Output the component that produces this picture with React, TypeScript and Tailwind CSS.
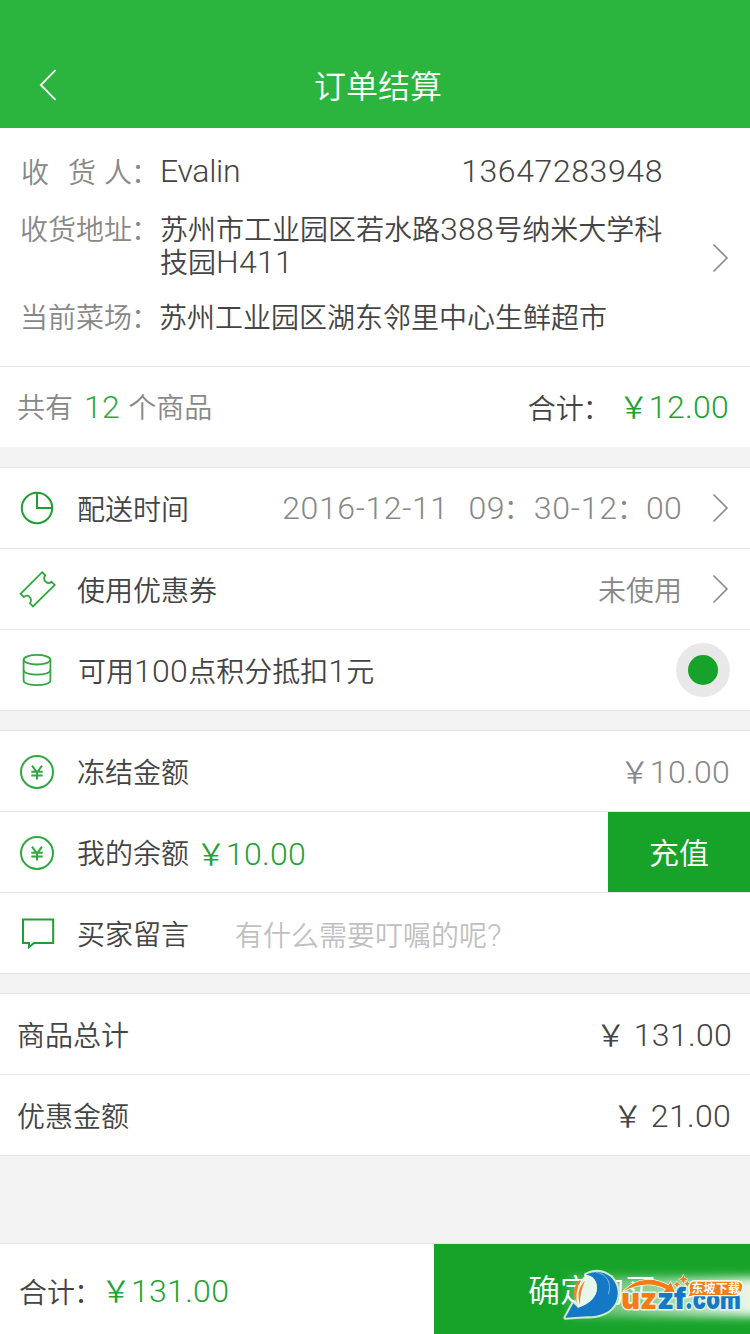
import type { ReactNode } from "react";

function Num({ children }: { children: ReactNode }) {
  return (
    <span className="font-['Roboto'] font-light text-[32px] tracking-[0.3px] leading-none">
      {children}
    </span>
  );
}

function Yen() {
  return <span className="text-[30px] inline-block w-[28px] -indent-[2px]">￥</span>;
}

function Colon() {
  return <span className="inline-block w-[28px] -translate-x-[1px]">：</span>;
}

function Arrow() {
  return (
    <svg width="18" height="30" viewBox="0 0 18 30" fill="none" stroke="#888" strokeWidth="1.6">
      <path d="M1.5 1.5 15 15 1.5 28.5" />
    </svg>
  );
}

function ClockIcon() {
  return (
    <svg width="38" height="38" viewBox="0 0 38 38" fill="none" stroke="#1f9e33" strokeWidth="2">
      <circle cx="19" cy="19" r="15.2" />
      <path d="M19 4v15h15" />
    </svg>
  );
}

function CouponIcon() {
  return (
    <svg width="38" height="38" viewBox="0 0 38 38" fill="none" stroke="#2fa83f" strokeWidth="1.8">
      <path d="M24.2 2.2 27.2 5.2C25.5 8 26 10.500 28 12C30 13.500 32 13 33.500 11.700L36.800 15 15 36.400 12 33.400C13.500 30.500 13.300 28.500 11.500 26.800C9.500 25 7.500 25.500 5.800 27L2.600 23.800Z" />
    </svg>
  );
}

function CoinsIcon() {
  return (
    <svg width="38" height="38" viewBox="0 0 38 38" fill="none" stroke="#2fa83f" strokeWidth="1.8">
      <ellipse cx="19" cy="8.700" rx="13.400" ry="4.800" />
      <path d="M5.600 8.700v20.800c0 6.200 26.800 6.200 26.800 0V8.700" />
      <path d="M5.600 19c0 6.200 26.800 6.200 26.800 0" />
    </svg>
  );
}

function YenIcon() {
  return (
    <svg className="translate-y-[1px]" width="38" height="38" viewBox="0 0 38 38" fill="none" stroke="#2fa83f" strokeWidth="2">
      <circle cx="19" cy="19" r="16" />
      <path d="M14 12.700 19 19.500l5-6.800M19 19.500V26.500M13.300 18.800h11.400M13.300 22.500h11.400" />
    </svg>
  );
}

function MessageIcon() {
  return (
    <svg className="translate-y-[1px]" width="38" height="38" viewBox="0 0 38 38" fill="none" stroke="#1f9e33" strokeWidth="2">
      <path d="M5 4.500h30.200v23.500H16l-5 4.200V28H5Z" />
    </svg>
  );
}

function Row({ icon, label, children }: { icon?: ReactNode; label: ReactNode; children?: ReactNode }) {
  return (
    <div className="h-[81px] flex items-center border-b border-[#e5e5e5] bg-white pl-[18px]">
      {icon && <div className="w-[60px] shrink-0">{icon}</div>}
      <div className="whitespace-nowrap -ml-px">{label}</div>
      {children}
    </div>
  );
}

function SiteBadge() {
  return (
    <svg
      className="absolute right-0 bottom-0"
      width="210"
      height="94"
      viewBox="0 0 630 282"
      fontFamily="Inter, sans-serif"
    >
      <defs>
        <filter id="glow" x="-20%" y="-60%" width="140%" height="220%">
          <feGaussianBlur stdDeviation="15" />
        </filter>
        <linearGradient id="haze" x1="0" y1="0" x2="1" y2="0">
          <stop offset="0" stopColor="#fff" stopOpacity="0.25" />
          <stop offset="0.5" stopColor="#fff" stopOpacity="0.6" />
          <stop offset="1" stopColor="#fff" />
        </linearGradient>
      </defs>
      <path d="M90 112H700V230H90Z" fill="url(#haze)" filter="url(#glow)" />
      <path
        d="M138 104C185 80 236 112 233 163C229 208 192 231 140 229L76 233L100 190L114 203C150 192 170 170 171 144C171 122 160 108 138 104Z"
        fill="#1478c6"
        stroke="#c9ebce"
        strokeWidth="12"
        strokeLinejoin="round"
        paintOrder="stroke"
      />
      <path d="M138 104C160 108 171 122 171 144C170 170 150 192 114 203C104 180 108 130 138 104Z" fill="#e8f7ea" />
      <path d="M168 97C202 102 216 130 205 163" fill="none" stroke="#7db8e6" strokeWidth="3" />
      <path d="M124 118C98 132 98 168 110 189C108 160 112 136 124 118Z" fill="#f58220" />
      <path d="M135 122C114 142 112 168 120 194C120 164 126 142 135 122Z" fill="#f58220" />
      <g fontWeight="900" fontSize="88" stroke="#e2f4e4" strokeWidth="9" strokeLinejoin="round" paintOrder="stroke">
        <text x="244" y="207" fill="#f57b14" textLength="107" lengthAdjust="spacingAndGlyphs">uz</text>
        <text x="351" y="207" fill="#1478c6" textLength="88" lengthAdjust="spacingAndGlyphs">zf</text>
        <text x="434" y="207" fill="#1478c6" textLength="168" lengthAdjust="spacingAndGlyphs">.com</text>
      </g>
      <path
        d="M250 154C290 112 340 110 386 136L392 126L404 155L370 157L378 147C340 128 298 128 250 154Z"
        fill="#f57b14"
        stroke="#fff"
        strokeWidth="4"
        paintOrder="stroke"
      />
      <path
        d="M430 104l4 10 10 4-10 4-4 10-4-10-10-4 10-4ZM411 123l3 7 7 3-7 3-3 7-3-7-7-3 7-3ZM442 122l3 6 6 3-6 3-3 6-3-6-6-3 6-3Z"
        fill="#f57b14"
        stroke="#fff"
        strokeWidth="3"
        paintOrder="stroke"
      />
      <path d="M462 123H592C606 123 611 134 607 147C604 159 596 167 584 167H462L440 173L449 158C444 142 448 123 462 123Z" fill="#f57b14" stroke="#fff" strokeWidth="4" />
      <text x="454" y="158" fill="#fff" fontSize="36" fontWeight="700" fontFamily="Noto Sans CJK SC, sans-serif" textLength="146">
        东坡下载
      </text>
    </svg>
  );
}

export default function App() {
  return (
    <div className="w-[750px] h-[1334px] flex flex-col overflow-hidden bg-[#f3f3f3] text-[#444] text-[28px] leading-none font-[350] font-['Noto_Sans_CJK_SC',sans-serif]">
      <header className="h-[128px] shrink-0 bg-[#2bb53e] text-white grid grid-cols-[1fr_auto_1fr] items-center px-[38px] pt-[42px]">
        <svg width="20" height="32" viewBox="0 0 20 32" fill="none" stroke="#fff" strokeWidth="1.8">
          <path d="M17.500 1.200 2.800 16 17.500 30.800" />
        </svg>
        <h1 className="text-[32px] font-[350] translate-x-[3px] -translate-y-[1px]">订单结算</h1>
        <span />
      </header>

      <section className="h-[239px] shrink-0 bg-white border-b border-[#e5e5e5] flex items-center pl-[20px] pr-[20px]">
        <div className="w-[643px] h-full flex flex-col pt-[26px]">
          <div className="h-[33px] flex items-center">
            <span className="w-[140px] text-[#888] flex">
              <span className="w-[48px] pl-px">收</span>
              <span className="w-[36px]">货</span>
              <span>人<Colon /></span>
            </span>
            <span className="font-['Roboto'] font-light text-[32px] tracking-[-0.3px]">Evalin</span>
            <span className="ml-auto font-['Roboto'] font-light text-[32px] tracking-[0.6px]">13647283948</span>
          </div>
          <div className="flex mt-[25px] leading-[33px]">
            <span className="w-[140px] text-[#888] whitespace-nowrap">收货地址<Colon /></span>
            <div className="whitespace-nowrap">
              <div className="h-[33px]">苏州市工业园区若水路<Num>388</Num>号纳米大学科</div>
              <div className="h-[33px]">技园<Num>H411</Num></div>
            </div>
          </div>
          <div className="flex mt-[22px] leading-[33px]">
            <span className="w-[139px] text-[#888] whitespace-nowrap">当前菜场<Colon /></span>
            <span className="whitespace-nowrap">苏州工业园区湖东邻里中心生鲜超市</span>
          </div>
        </div>
        <div className="ml-auto mt-[22px]"><Arrow /></div>
      </section>

      <section className="h-[80px] shrink-0 bg-white flex items-center pl-[17px] pr-[21px] pb-px">
        <span className="text-[#888] whitespace-pre">
          共有<span className="text-[#2fa83f] ml-[11px] mr-[8px]"><Num>12</Num></span>个商品
        </span>
        <span className="ml-auto">合计<Colon /></span>
        <span className="ml-[9px] text-[#1ea332]"><Yen /><Num>12.00</Num></span>
      </section>

      <section className="mt-[20px] shrink-0 border-t border-[#e5e5e5]">
        <Row icon={<ClockIcon />} label="配送时间">
          <span className="ml-auto text-[#888] whitespace-nowrap flex items-center">
            <span className="font-['Roboto'] font-light text-[32px] tracking-[0.6px]">2016-12-11</span>
            <span className="ml-[20px] mr-[1px]"><Num>09</Num><Colon /></span>
            <span><Num><span className="tracking-[0.8px]">30-12</span></Num><Colon /></span>
            <span><Num>00</Num></span>
          </span>
          <span className="ml-[30px] mr-[20px]"><Arrow /></span>
        </Row>
        <Row icon={<CouponIcon />} label="使用优惠券">
          <span className="ml-auto text-[#888]">未使用</span>
          <span className="ml-[30px] mr-[20px]"><Arrow /></span>
        </Row>
        <Row icon={<CoinsIcon />} label={<div className="pt-[2px] pl-px">可用<Num>100</Num>点积分抵扣<Num>1</Num>元</div>}>
          <button className="ml-auto mr-[20px] size-[54px] rounded-full bg-[#e8e8e8] flex items-center justify-center">
            <span className="size-[30px] rounded-full bg-[#17a32a]" />
          </button>
        </Row>
      </section>

      <section className="mt-[19px] shrink-0 border-t border-[#e5e5e5]">
        <Row icon={<YenIcon />} label="冻结金额">
          <span className="ml-auto mr-[20px] text-[#888]"><Yen /><Num>10.00</Num></span>
        </Row>
        <Row icon={<YenIcon />} label="我的余额">
          <span className="ml-[9px] mt-[3px] text-[#1ea332]"><Yen /><Num>10.00</Num></span>
          <button className="ml-auto w-[142px] h-[80px] pb-[2px] bg-[#17a32a] text-white text-[30px] font-[350]">充值</button>
        </Row>
        <Row icon={<MessageIcon />} label="买家留言">
          <span className="ml-[46px] mt-[3px] text-[#c0c0c0]">有什么需要叮嘱的呢<Num>?</Num></span>
        </Row>
      </section>

      <section className="mt-[19px] shrink-0 border-t border-[#e5e5e5]">
        <Row label="商品总计">
          <span className="ml-auto mr-[18px]"><Yen /><Num> 131.00</Num></span>
        </Row>
        <Row label="优惠金额">
          <span className="ml-auto mr-[19px]"><Yen /><Num> 21.00</Num></span>
        </Row>
      </section>

      <footer className="relative mt-auto h-[91px] shrink-0 border-t border-[#e5e5e5] bg-white flex items-center">
        <span className="ml-[19px] mt-[3px]">合计<Colon /></span>
        <span className="mt-[3px] text-[#1ea332]"><Yen /><Num>131.00</Num></span>
        <button className="ml-auto w-[316px] h-[90px] pb-[3px] bg-[#17a32a] text-white text-[32px] font-[350]">确定购买</button>
        <SiteBadge />
      </footer>
    </div>
  );
}
